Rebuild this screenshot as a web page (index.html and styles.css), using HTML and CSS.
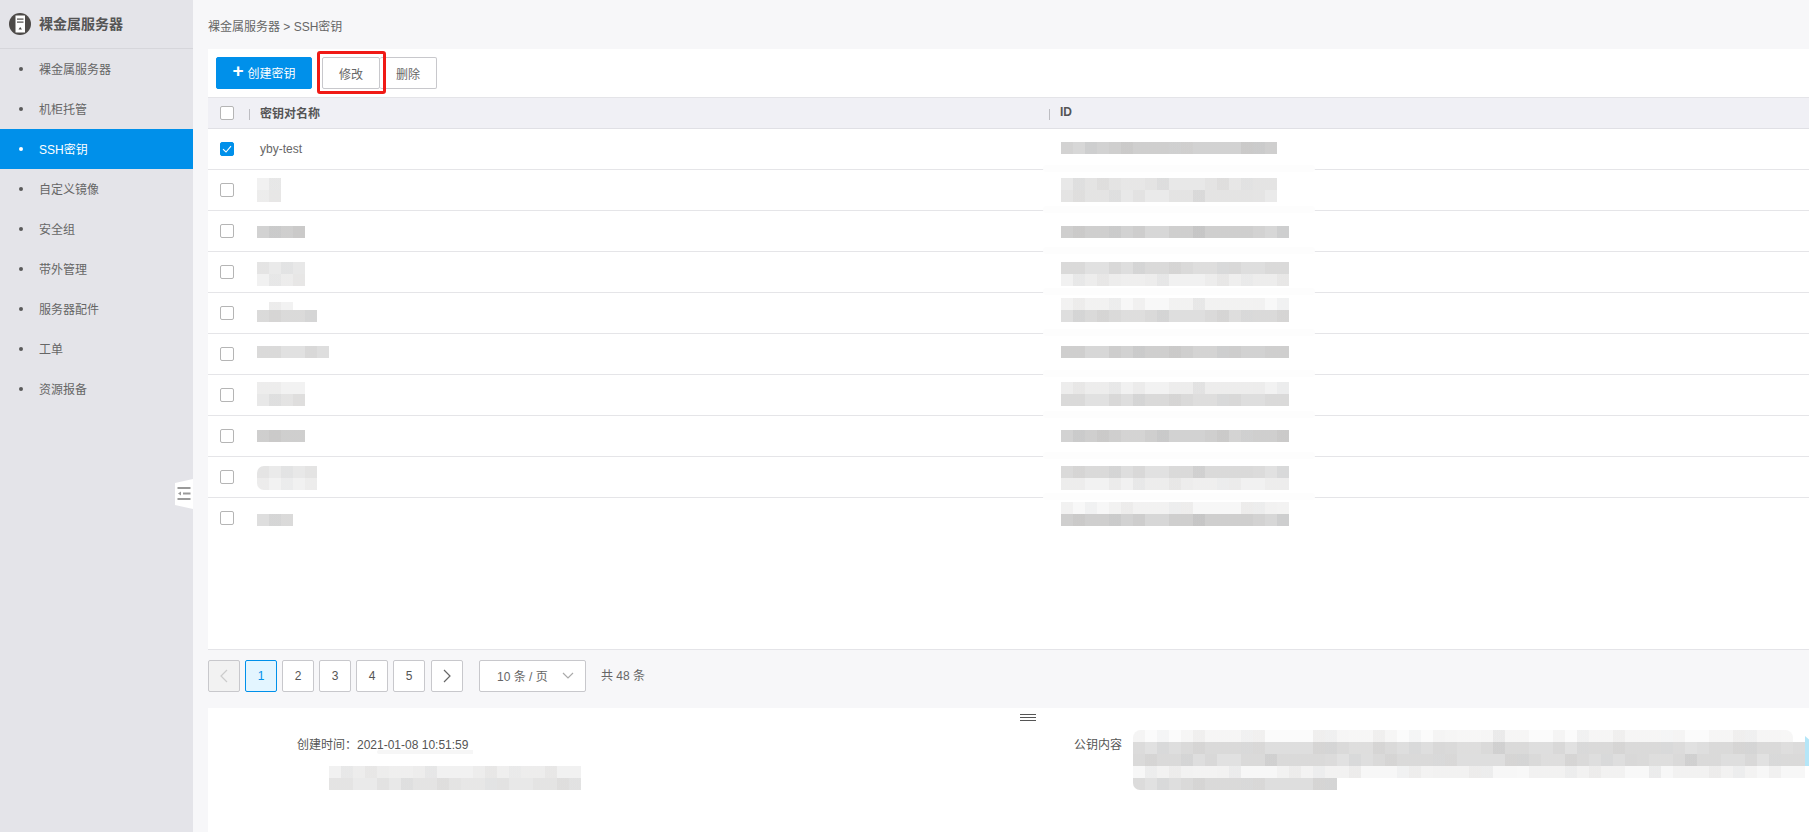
FILE: index.html
```html
<!DOCTYPE html>
<html lang="zh-CN">
<head>
<meta charset="utf-8">
<title>SSH密钥</title>
<link rel="stylesheet" href="styles.css">
</head>
<body>
<div class="app">
  <aside class="sidebar">
    <div class="side-head">
      <svg class="side-logo" viewBox="0 0 22 22" width="22" height="22">
        <circle cx="11" cy="11" r="11" fill="#4d4a48"/>
        <rect x="6.5" y="2.5" width="9.5" height="17" fill="#fff"/>
        <rect x="8" y="5.5" width="6.5" height="1.2" fill="#4d4a48"/>
        <rect x="8" y="8.5" width="6.5" height="1.2" fill="#4d4a48"/>
        <path d="M9.5 16.5 L11.2 14 L13 16.5 Z" fill="#4d4a48"/>
      </svg>
      <span class="side-title">裸金属服务器</span>
    </div>
    <nav class="nav">
      <a class="nav-item"><i class="dot"></i>裸金属服务器</a>
      <a class="nav-item"><i class="dot"></i>机柜托管</a>
      <a class="nav-item active"><i class="dot"></i>SSH密钥</a>
      <a class="nav-item"><i class="dot"></i>自定义镜像</a>
      <a class="nav-item"><i class="dot"></i>安全组</a>
      <a class="nav-item"><i class="dot"></i>带外管理</a>
      <a class="nav-item"><i class="dot"></i>服务器配件</a>
      <a class="nav-item"><i class="dot"></i>工单</a>
      <a class="nav-item"><i class="dot"></i>资源报备</a>
    </nav>
    <div class="collapse">
      <svg viewBox="0 0 18 30" width="18" height="30">
        <path d="M0 4 L18 0 V30 L0 26 Z" fill="#fff"/>
        <rect x="2.5" y="8" width="13" height="2" fill="#9a9a9a"/>
        <rect x="8" y="13.5" width="7.5" height="2" fill="#9a9a9a"/>
        <path d="M3 14.5 L6 12.5 V16.5 Z" fill="#9a9a9a"/>
        <rect x="2.5" y="19" width="13" height="2" fill="#9a9a9a"/>
      </svg>
    </div>
  </aside>

  <main class="main">
    <div class="crumb">裸金属服务器 &gt; SSH密钥</div>

    <section class="panel">
      <div class="toolbar">
        <button class="btn btn-primary"><span class="plus">+</span>创建密钥</button>
        <div class="btn-group">
          <button class="btn btn-edit">修改</button>
          <button class="btn btn-del">删除</button>
          <span class="highlight"></span>
        </div>
      </div>

      <div class="thead">
        <span class="th-check"><span class="cb"></span></span>
        <span class="sep"></span>
        <span class="th-name">密钥对名称</span>
        <span class="sep"></span>
        <span class="th-id">ID</span>
      </div>

      <div class="row">
        <div class="cell-check"><span class="cb checked"><svg viewBox="0 0 14 14" width="14" height="14"><path d="M3 7.2 L6 10 L11 4.2" fill="none" stroke="#fff" stroke-width="1.1"/></svg></span></div>
        <div class="cell-name"><span class="key-name">yby-test</span></div>
        <div class="cell-id o13"><div class="mz d w216"></div></div>
      </div>
      <div class="row smear">
        <div class="cell-check"><span class="cb"></span></div>
        <div class="cell-name o8"><div class="mz xl w24 v1"></div><div class="mz xl w24 v2"></div></div>
        <div class="cell-id o8"><div class="mz l w216 v1"></div><div class="mz l w216 v2"></div></div>
      </div>
      <div class="row smear">
        <div class="cell-check"><span class="cb"></span></div>
        <div class="cell-name o15"><div class="mz d w48 v1"></div></div>
        <div class="cell-id o15"><div class="mz d w228 v2"></div></div>
      </div>
      <div class="row smear">
        <div class="cell-check"><span class="cb"></span></div>
        <div class="cell-name o10"><div class="mz l w48"></div><div class="mz xl w48 v1"></div></div>
        <div class="cell-id o10"><div class="mz m w228 v3"></div><div class="mz xl w228 v1"></div></div>
      </div>
      <div class="row smear">
        <div class="cell-check"><span class="cb"></span></div>
        <div class="cell-name o9"><div class="mz xl w24 h8 ind"></div><div class="mz m w60 v2"></div></div>
        <div class="cell-id o5"><div class="mz xxl w228 v2"></div><div class="mz m w228 v1"></div></div>
      </div>
      <div class="row smear">
        <div class="cell-check"><span class="cb"></span></div>
        <div class="cell-name o12"><div class="mz m w72 v3"></div></div>
        <div class="cell-id o12"><div class="mz d w228 v3"></div></div>
      </div>
      <div class="row smear">
        <div class="cell-check"><span class="cb"></span></div>
        <div class="cell-name o7"><div class="mz xl w48 v3"></div><div class="mz l w48 v1"></div></div>
        <div class="cell-id o7"><div class="mz xl w228 v2"></div><div class="mz m w228 v3"></div></div>
      </div>
      <div class="row smear">
        <div class="cell-check"><span class="cb"></span></div>
        <div class="cell-name o14"><div class="mz d w48 v2"></div></div>
        <div class="cell-id o14"><div class="mz d w228 v1"></div></div>
      </div>
      <div class="row smear">
        <div class="cell-check"><span class="cb"></span></div>
        <div class="cell-name o9"><div class="mz l w60 rt"></div><div class="mz xl w60 rb"></div></div>
        <div class="cell-id o9"><div class="mz m w228 v2"></div><div class="mz xl w228 v3"></div></div>
      </div>
      <div class="row last smear">
        <div class="cell-check"><span class="cb"></span></div>
        <div class="cell-name o16"><div class="mz m w36 v1"></div></div>
        <div class="cell-id o4"><div class="mz xxl w228"></div><div class="mz d w228 v2"></div></div>
      </div>
    </section>

    <div class="pager">
      <span class="page disabled"><svg viewBox="0 0 10 16" width="10" height="16"><path d="M8 2 L2 8 L8 14" fill="none" stroke="#ccc" stroke-width="1.2"/></svg></span>
      <span class="page current">1</span>
      <span class="page">2</span>
      <span class="page">3</span>
      <span class="page">4</span>
      <span class="page">5</span>
      <span class="page next"><svg viewBox="0 0 10 16" width="10" height="16"><path d="M2 2 L8 8 L2 14" fill="none" stroke="#666" stroke-width="1.2"/></svg></span>
      <span class="page-size">10 条 / 页<svg viewBox="0 0 12 7" width="12" height="7"><path d="M1 1 L6 6 L11 1" fill="none" stroke="#aaa" stroke-width="1.2"/></svg></span>
      <span class="total">共 48 条</span>
    </div>

    <section class="detail">
      <span class="drag"></span>
      <div class="detail-left">
        <div class="detail-line">创建时间：2021-01-08 10:51:59<span class="date-smear"></span></div>
        <div class="detail-mz"><div class="mz xl w252 v1"></div><div class="mz l w252 v3"></div></div>
      </div>
      <div class="detail-right">
        <div class="detail-label">公钥内容</div>
        <div class="key-block">
          <div class="mz xxxl top-row"></div>
          <div class="mz m"></div>
          <div class="mz m v2"></div>
          <div class="mz xxl v1"></div>
          <div class="mz m w204 rb"></div>
        </div>
        <span class="cyan"></span>
      </div>
    </section>
  </main>
</div>
</body>
</html>
```
FILE: styles.css
```css
* { box-sizing: border-box; }
html, body { margin: 0; height: 100%; }
body {
  font-family: "Liberation Sans", "Noto Sans CJK SC", sans-serif;
  font-size: 12px;
  color: #555;
  background: #f7f7f9;
  overflow: hidden;
}
.app { display: flex; height: 832px; }

/* sidebar */
.sidebar { position: relative; flex: 0 0 193px; background: #e4e4e9; }
.side-head {
  height: 49px;
  display: flex;
  align-items: center;
  padding-left: 9px;
  gap: 8px;
  border-bottom: 1px solid #d6d6db;
}
.side-title { font-size: 14px; font-weight: 700; color: #555; padding-bottom: 2px; }
.nav { display: flex; flex-direction: column; }
.nav-item {
  height: 40px;
  display: flex;
  align-items: center;
  padding: 0 0 2px 19px;
  color: #666;
}
.nav-item .dot {
  width: 4px;
  height: 4px;
  border-radius: 50%;
  background: #5a5a5a;
  margin: 2px 16px 0 0;
}
.nav-item.active { background: #0090ea; color: #fff; }
.nav-item.active .dot { background: #fff; }
.collapse { position: absolute; left: 175px; top: 479px; width: 18px; height: 30px; }
.collapse svg { display: block; }

/* main */
.main { flex: 1; min-width: 0; padding-left: 15px; display: flex; flex-direction: column; }
.crumb { height: 49px; padding-top: 19px; line-height: 16px; color: #666; }

.panel { height: 601px; background: #fff; border-bottom: 1px solid #e4e4e8; }
.toolbar { height: 48px; display: flex; padding: 8px 0 0 8px; align-items: flex-start; }
.btn {
  height: 32px;
  font: inherit;
  color: #666;
  background: #fff;
  border: 1px solid #c8c8cc;
  border-radius: 2px;
  padding: 0;
}
.btn-primary {
  width: 96px;
  background: #0090ea;
  border-color: #0090ea;
  color: #fff;
  display: flex;
  align-items: center;
  justify-content: center;
  padding-bottom: 2px;
}
.plus { font-size: 19px; font-weight: 700; line-height: 20px; margin-right: 4px; margin-top: -2px; }
.btn-group { position: relative; display: flex; margin-left: 10px; }
.btn-edit { width: 58px; }
.btn-del { width: 57px; border-left: 0; }
.highlight {
  position: absolute;
  left: -5px;
  top: -6px;
  width: 69px;
  height: 43px;
  border: 3px solid #f01a16;
  border-radius: 3px;
}

.thead {
  height: 32px;
  display: flex;
  align-items: center;
  background: #f0f0f5;
  border-top: 1px solid #e4e4e8;
  border-bottom: 1px solid #e0e0e5;
  font-weight: 700;
  color: #555;
}
.th-check { width: 41px; display: flex; padding-left: 12px; }
.sep { width: 1px; height: 11px; background: #bdbdc2; margin-top: 2px; }
.th-name { width: 799px; padding: 0 0 2px 10px; }
.th-id { padding: 0 0 2px 10px; }

.cb {
  display: block;
  width: 14px;
  height: 14px;
  border: 1px solid #b5b5b5;
  border-radius: 2px;
  background: #fff;
}
.cb.checked { background: #0090ea; border-color: #0090ea; position: relative; }
.cb.checked svg { display: block; margin: -1px; }

.row {
  position: relative;
  height: 41px;
  display: flex;
  border-bottom: 1px solid #e5e5e8;
}
.row.last { border-bottom: 0; }
.row.smear::before {
  content: "";
  position: absolute;
  left: 835px;
  top: -5px;
  width: 272px;
  height: 7px;
  background: #fdfdfd;
  border-radius: 6px;
}
.cell-check { flex: 0 0 49px; padding: 13px 0 0 12px; }
.cell-name { flex: 0 0 804px; }
.cell-id { flex: 1; }
.key-name { display: block; padding-left: 3px; line-height: 40px; color: #666; }

/* offsets of blurred blocks inside a row */
.o4 { padding-top: 4px; }
.o5 { padding-top: 5px; }
.o7 { padding-top: 7px; }
.o8 { padding-top: 8px; }
.o9 { padding-top: 9px; }
.o10 { padding-top: 10px; }
.o12 { padding-top: 12px; }
.o13 { padding-top: 13px; }
.o14 { padding-top: 14px; }
.o15 { padding-top: 15px; }
.o16 { padding-top: 16px; }

/* mosaic (pixelated, blurred-out text) */
.mz {
  height: 12px;
  background-color: #dcdcdc;
  background-image:
    linear-gradient(90deg, rgba(110,100,95,.045) 12px, transparent 12px),
    linear-gradient(90deg, transparent 24px, rgba(95,110,125,.04) 24px, rgba(95,110,125,.04) 36px, transparent 36px),
    linear-gradient(90deg, rgba(255,255,255,.1) 24px, transparent 24px),
    linear-gradient(90deg, transparent 48px, rgba(130,120,110,.04) 48px);
  background-size: 60px 100%, 84px 100%, 108px 100%, 132px 100%;
  background-repeat: repeat-x;
}
.mz.d { background-color: #d2d2d2; }
.mz.m { background-color: #dedede; }
.mz.l { background-color: #e8e8e8; }
.mz.xl { background-color: #f1f1f1; }
.mz.xxl { background-color: #f7f7f7; }
.mz.xxxl { background-color: #fbfbfb; }
.mz.v1 { background-position: -24px 0, -12px 0, -48px 0, -36px 0; }
.mz.v2 { background-position: -48px 0, -60px 0, -24px 0, -72px 0; }
.mz.v3 { background-position: -12px 0, -36px 0, -84px 0, -108px 0; }
.mz.h8 { height: 8px; }
.mz.ind { margin-left: 12px; }
.mz.rt { border-top-left-radius: 7px; }
.mz.rb { border-bottom-left-radius: 7px; }
.w24 { width: 24px; }
.w36 { width: 36px; }
.w48 { width: 48px; }
.w60 { width: 60px; }
.w72 { width: 72px; }
.w204 { width: 204px; }
.w216 { width: 216px; }
.w228 { width: 228px; }
.w252 { width: 252px; }

/* pager */
.pager { height: 58px; display: flex; align-items: flex-start; padding-top: 10px; gap: 5px; }
.page {
  width: 32px;
  height: 32px;
  display: flex;
  align-items: center;
  justify-content: center;
  background: #fff;
  border: 1px solid #c8c8cc;
  border-radius: 2px;
  color: #555;
}
.page.disabled { background: #f2f2f2; }
.page.current { background: #e3f5ff; border-color: #0090ea; color: #0090ea; }
.page.next { margin-left: 1px; }
.page-size {
  width: 107px;
  height: 32px;
  margin-left: 11px;
  display: flex;
  align-items: center;
  justify-content: space-between;
  padding: 0 11px 2px 17px;
  background: #fff;
  border: 1px solid #c8c8cc;
  border-radius: 2px;
  color: #666;
}
.total { margin-left: 10px; line-height: 32px; color: #666; }

/* detail */
.detail { position: relative; flex: 1; background: #fff; display: flex; padding-top: 22px; }
.drag {
  position: absolute;
  left: 812px;
  top: 6px;
  width: 16px;
  height: 7px;
  border-top: 1px solid #555;
  border-bottom: 1px solid #555;
}
.drag::before {
  content: "";
  display: block;
  height: 1px;
  margin-top: 2px;
  background: #555;
}
.detail-left { flex: 0 0 866px; padding: 7px 0 0 89px; }
.detail-line { position: relative; line-height: 16px; color: #555; }
.date-smear {
  position: absolute;
  left: 80px;
  top: 13px;
  width: 96px;
  height: 4px;
  background: #f6f6f6;
  border-radius: 6px 0 0 6px;
}
.detail-mz { margin: 13px 0 0 32px; }
.detail-right { position: relative; flex: 1; display: flex; min-width: 0; padding-right: 4px; }
.detail-label { width: 59px; padding-top: 7px; line-height: 16px; color: #555; }
.key-block { flex: 1; min-width: 0; }
.top-row { width: 660px; border-radius: 8px 8px 0 0; }
.cyan {
  position: absolute;
  right: 0;
  top: 6px;
  width: 4px;
  height: 30px;
  background: #b4e6f8;
  clip-path: polygon(0 0, 100% 12%, 100% 100%, 0 100%);
}
```
